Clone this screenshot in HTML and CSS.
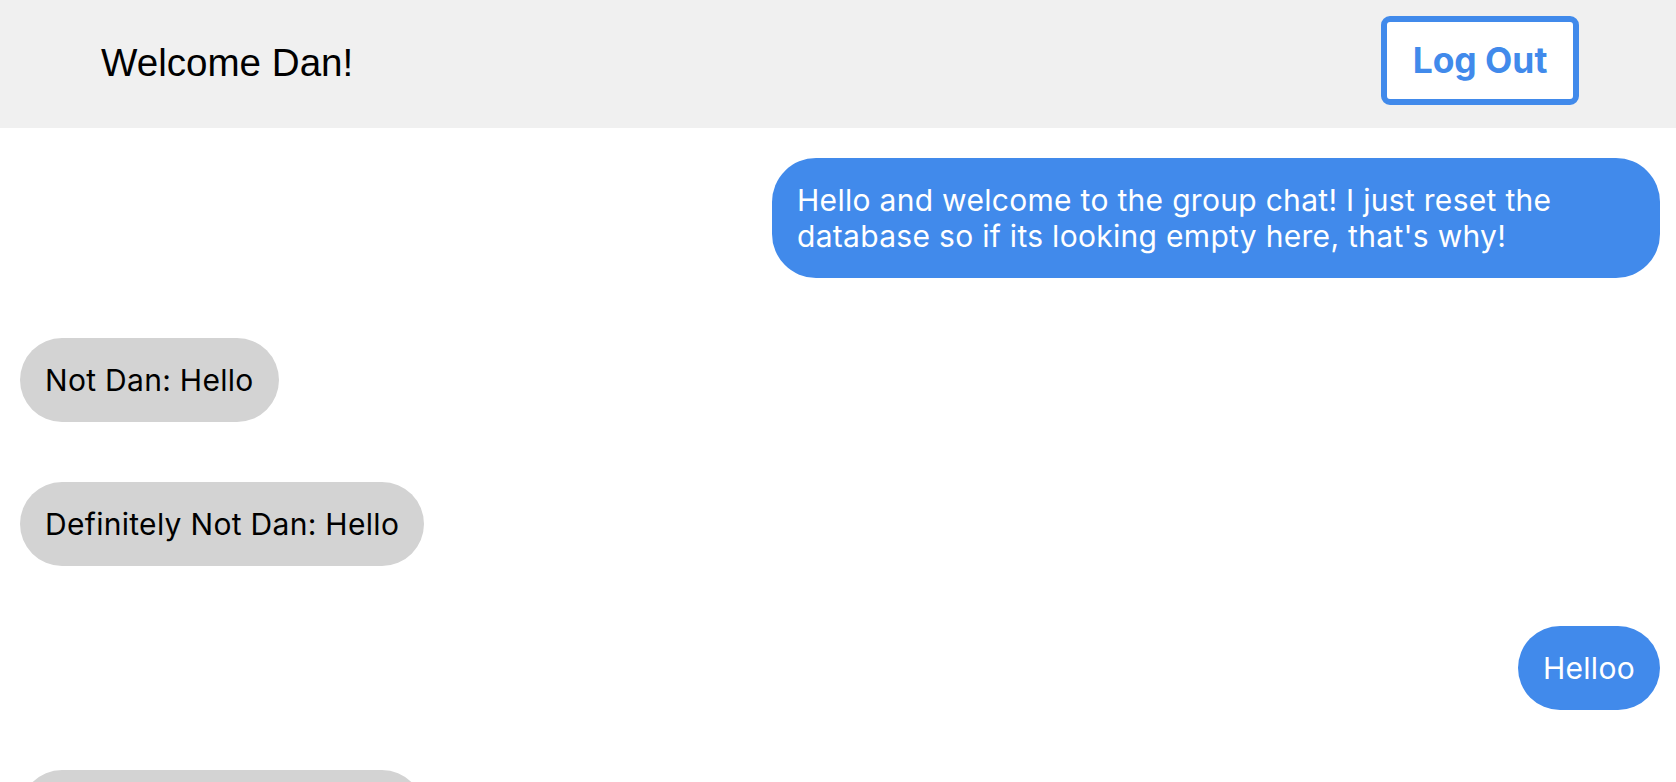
FILE: index.html
```html
<!DOCTYPE html>
<html lang="en">
<head>
<meta charset="utf-8">
<title>Group Chat</title>
<link rel="stylesheet" href="styles.css">
</head>
<body>
<header class="topbar">
  <h1 class="welcome">Welcome Dan!</h1>
  <button class="logout">Log Out</button>
</header>
<main class="chat">
  <div class="msg mine">Hello and welcome to the group chat! I just reset the database so if its looking empty here, that's why!</div>
  <div class="msg theirs">Not Dan: Hello</div>
  <div class="msg theirs">Definitely Not Dan: Hello</div>
  <div class="msg mine">Helloo</div>
  <div class="msg theirs">Definitely Not Dan: Hello</div>
</main>
</body>
</html>
```
FILE: styles.css
```css
* { box-sizing: border-box; }
html, body { margin: 0; padding: 0; background: #ffffff; }
body { font-family: "Liberation Sans", Arial, sans-serif; }

.topbar {
  height: 128px;
  background: #f0f0f0;
  display: flex;
  justify-content: space-between;
  align-items: flex-start;
  padding: 0 97px 0 101px;
}
.welcome {
  margin: 41px 0 0 0;
  font-family: "Liberation Sans", Arial, sans-serif;
  font-weight: normal;
  font-size: 38.6px;
  line-height: 44px;
  color: #000;
}
.logout {
  margin-top: 16px;
  width: 198px;
  height: 89px;
  border: 6px solid #418aeb;
  border-radius: 9px;
  background: #ffffff;
  color: #418aeb;
  font-family: Inter, "Noto Sans", sans-serif;
  font-weight: 700;
  font-size: 35.4px;
  padding: 0;
}

.chat {
  display: flex;
  flex-direction: column;
  gap: 60px;
  padding: 30px 16px 0 20px;
}
.msg {
  max-width: 888px;
  padding: 24px 25px;
  font-family: Inter, "Noto Sans", sans-serif;
  font-size: 30px;
  line-height: 36px;
  letter-spacing: 0.3px;
  border-radius: 44px;
}
.mine {
  align-self: flex-end;
  background: #418aeb;
  color: #ffffff;
}
.theirs {
  align-self: flex-start;
  background: #d3d3d3;
  color: #000000;
}
```
